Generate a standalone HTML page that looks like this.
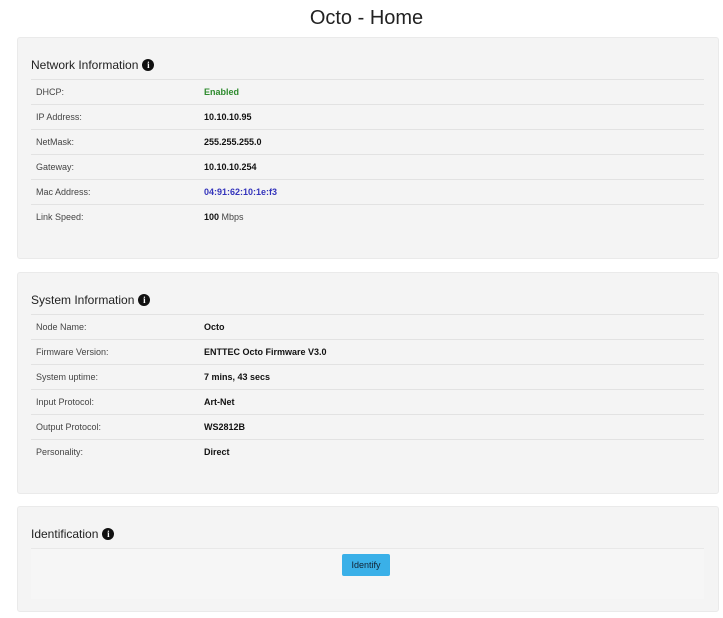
<!DOCTYPE html>
<html><head><style>
body{margin:0;background:#fff;font-family:"Liberation Sans",Arial,sans-serif;width:723px;height:618px;overflow:hidden;position:relative}
h1{position:absolute;top:7px;left:0;width:733px;text-align:center;margin:0;font-weight:normal;font-size:20px;color:#222}
.p{position:absolute;left:17px;width:700px;background:#f4f4f4;border:1px solid #eaeaea;border-radius:3px}
.h{position:absolute;left:13px;font-size:12px;color:#222;line-height:14px;display:flex;align-items:center}
.i{display:inline-block;width:12px;height:12px;border-radius:50%;background:#111;color:#fff;font:bold 9px "Liberation Serif",serif;text-align:center;line-height:12px;margin-left:4px}
table{position:absolute;left:13px;width:673px;border-collapse:collapse;font-size:9px}
td{height:24px;border-top:1px solid #e2e2e2;padding:0 0 0 5px;color:#444}
td:first-child{width:163px}
td.v{font-weight:bold;color:#111}
.btn{position:absolute;left:324px;top:47px;width:48px;height:22px;background:#3ab0e8;border-radius:2px;font-size:9px;text-align:center;line-height:22px;color:#123}
</style></head><body>
<h1>Octo - Home</h1>
<div class="p" style="top:37px;height:220px">
<div class="h" style="top:20px">Network Information<span class="i">i</span></div>
<table style="top:41px">
<tr><td>DHCP:</td><td class="v" style="color:#2e8b2e">Enabled</td></tr>
<tr><td>IP Address:</td><td class="v">10.10.10.95</td></tr>
<tr><td>NetMask:</td><td class="v">255.255.255.0</td></tr>
<tr><td>Gateway:</td><td class="v">10.10.10.254</td></tr>
<tr><td>Mac Address:</td><td class="v" style="color:#3333bb">04:91:62:10:1e:f3</td></tr>
<tr><td>Link Speed:</td><td><b style="color:#111">100</b> Mbps</td></tr>
</table></div>
<div class="p" style="top:272px;height:220px">
<div class="h" style="top:20px">System Information<span class="i">i</span></div>
<table style="top:41px">
<tr><td>Node Name:</td><td class="v">Octo</td></tr>
<tr><td>Firmware Version:</td><td class="v">ENTTEC Octo Firmware V3.0</td></tr>
<tr><td>System uptime:</td><td class="v">7 mins, 43 secs</td></tr>
<tr><td>Input Protocol:</td><td class="v">Art-Net</td></tr>
<tr><td>Output Protocol:</td><td class="v">WS2812B</td></tr>
<tr><td>Personality:</td><td class="v">Direct</td></tr>
</table></div>
<div class="p" style="top:506px;height:104px">
<div class="h" style="top:20px">Identification<span class="i">i</span></div>
<div style="position:absolute;left:13px;top:41px;width:673px;border-top:1px solid #e8e8e8;height:50px;background:#f6f6f6"></div>
<div class="btn">Identify</div>
</div>
</body></html>
